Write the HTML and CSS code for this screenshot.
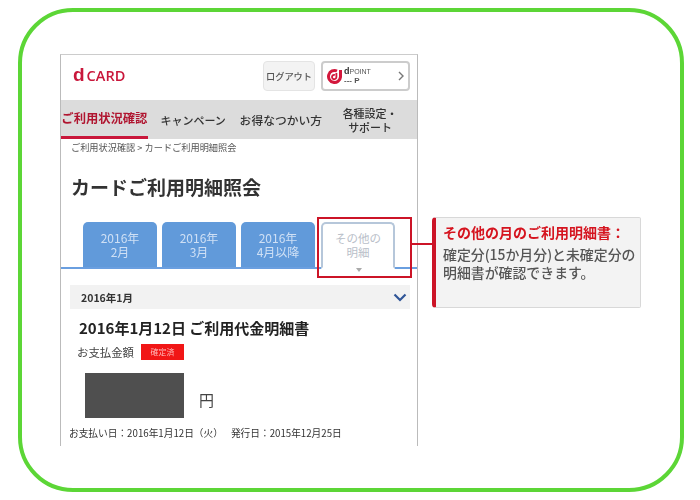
FILE: index.html
```html
<!DOCTYPE html>
<html lang="ja">
<head>
<meta charset="UTF-8">
<meta name="viewport" content="width=device-width, initial-scale=1.0">
<title>カードご利用明細照会</title>
<link rel="stylesheet" href="styles.css">
</head>
<body>

<div class="frame">
    <div class="phone">
        <div class="top">
            <div class="logo"><span class="logo-d">d</span><span class="logo-card">CARD</span></div>
            <div class="top-buttons">
                <div class="logout">ログアウト</div>
                <div class="point">
                    <svg class="point-icon" width="16" height="17" viewBox="0 0 16 17">
                        <path d="M10 3 A6 6 0 1 0 13.5 9 V2" fill="none" stroke="#d3173c" stroke-width="3"/>
                        <path d="M8 7 A2.2 2.2 0 1 0 9.4 9 V5" fill="none" stroke="#d3173c" stroke-width="1.8"/>
                    </svg>
                    <div class="point-text">
                        <div class="point-name"><b>d</b>POINT</div>
                        <div class="point-value">--- P</div>
                    </div>
                    <svg class="point-arrow" width="6" height="10" viewBox="0 0 6 10">
                        <path d="M1 1 L5 5 L1 9" fill="none" stroke="#777" stroke-width="1.4"/>
                    </svg>
                </div>
            </div>
        </div>

        <div class="nav">
            <div class="nav-item active">ご利用状況確認</div>
            <div class="nav-item campaign">キャンペーン</div>
            <div class="nav-item deals">お得なつかい方</div>
            <div class="nav-item settings">各種設定・<br>サポート</div>
        </div>

        <div class="crumb">ご利用状況確認 &gt; カードご利用明細照会</div>
        <h1>カードご利用明細照会</h1>

        <div class="tabs">
            <div class="tab">2016年<br>2月</div>
            <div class="tab">2016年<br>3月</div>
            <div class="tab">2016年<br>4月以降</div>
            <div class="tab other">その他の<br>明細<span class="tab-mark"></span></div>
        </div>

        <div class="month">
            <span>2016年1月</span>
            <svg width="14" height="9" viewBox="0 0 14 9">
                <path d="M1.5 1.5 L7 7 L12.5 1.5" fill="none" stroke="#2f5597" stroke-width="2.2"/>
            </svg>
        </div>

        <h2>2016年1月12日 ご利用代金明細書</h2>
        <div class="amount-label">お支払金額 <span class="badge">確定済</span></div>
        <div class="amount">
            <div class="hidden-value"></div>
            <span class="yen">円</span>
        </div>
        <div class="dates">
            <span>お支払い日：2016年1月12日（火）</span>
            <span>発行日：2015年12月25日</span>
        </div>
    </div>

    <div class="highlight"></div>
    <div class="connector"></div>
    <div class="callout">
        <div class="callout-title">その他の月のご利用明細書：</div>
        <div class="callout-text">確定分(15か月分)と未確定分の<br>明細書が確認できます。</div>
    </div>
</div>

</body>
</html>
```

FILE: styles.css
```css
* {
    box-sizing: border-box;
}
body {
    font-family: "Noto Sans CJK JP", "Liberation Sans", sans-serif;
    margin: 0;
    padding: 8px 16px 0 18px;
    background-color: #fff;
    color: #333;
}
.frame {
    position: relative;
    height: 484px;
    padding: 42px 0 0 38px;
    border: 4px solid #5cd636;
    border-radius: 55px;
}
.phone {
    width: 358px;
    height: 392px;
    overflow: hidden;
    border: 1px solid #bbb;
    border-top-color: #ccc;
    border-bottom: none;
    filter: blur(0.45px);
}
.top {
    display: flex;
    justify-content: space-between;
    height: 45px;
    padding: 6px 7px 0 12px;
}
.logo {
    display: flex;
    align-items: baseline;
    gap: 2px;
    height: 30px;
    padding-top: 2px;
    font-family: "Open Sans", sans-serif;
    line-height: 24px;
    color: #c9173b;
}
.logo-d {
    font-family: "Liberation Sans", sans-serif;
    font-size: 19px;
    font-weight: bold;
}
.logo-card {
    font-size: 14.5px;
    font-weight: 600;
}
.top-buttons {
    display: flex;
    gap: 6px;
}
.logout {
    width: 52px;
    height: 30px;
    line-height: 29px;
    text-align: center;
    font-size: 9.2px;
    font-weight: 500;
    color: #555;
    background-color: #f3f3f3;
    border: 1px solid #e4e4e4;
    border-radius: 4px;
}
.point {
    display: flex;
    align-items: center;
    width: 89px;
    height: 30px;
    padding: 0 4px 0 4px;
    background-color: #fff;
    border: 2px solid #ccc;
    border-radius: 4px;
}
.point-text {
    flex: 1;
    margin-left: 1px;
    color: #555;
    font-family: "Liberation Sans", sans-serif;
    line-height: 9px;
}
.point-name {
    font-size: 7px;
}
.point-name b {
    font-size: 9px;
    color: #333;
}
.point-value {
    font-size: 8px;
    font-weight: bold;
}
.nav {
    display: flex;
    height: 39px;
    background-color: #dcdcdc;
    color: #333;
    font-size: 11.5px;
    font-weight: 500;
    white-space: nowrap;
}
.nav-item {
    display: flex;
    align-items: center;
    justify-content: center;
    text-align: center;
    line-height: 14px;
}
.nav-item.active {
    width: 87px;
    font-size: 12.3px;
    color: #b01530;
    font-weight: bold;
    border-bottom: 3px solid #c9173b;
}
.nav-item.campaign {
    width: 91px;
    font-size: 11px;
}
.nav-item.deals {
    width: 85px;
    font-size: 11.8px;
}
.nav-item.settings {
    width: 94px;
    font-size: 11px;
}
.crumb {
    padding: 1px 0 0 10px;
    font-size: 9.2px;
    color: #555;
    line-height: 14px;
}
h1 {
    margin: 20px 0 0 10px;
    font-size: 19px;
    line-height: 26px;
    color: #333;
}
.tabs {
    display: flex;
    gap: 5px;
    height: 47px;
    margin-top: 22px;
    padding-left: 22px;
    border-bottom: 2px solid #6a9fe0;
}
.tab {
    width: 74px;
    height: 45px;
    padding-top: 9px;
    text-align: center;
    font-size: 12px;
    line-height: 14px;
    color: #cfe0f5;
    background-color: #619ada;
    border-radius: 5px 5px 0 0;
}
.tab.other {
    position: relative;
    height: 47px;
    margin-left: 1px;
    font-size: 11.5px;
    color: #b9c0c9;
    background-color: #fff;
    border: 2px solid #b6c7da;
    border-bottom-color: #fff;
    padding-top: 7px;
}
.tab-mark {
    position: absolute;
    left: 33px;
    bottom: -5px;
    border-left: 3px solid transparent;
    border-right: 3px solid transparent;
    border-top: 4px solid #aaa;
}
.month {
    display: flex;
    align-items: center;
    justify-content: space-between;
    height: 24px;
    margin: 16px 7px 0 9px;
    padding: 0 3px 0 11px;
    font-size: 10.5px;
    font-weight: bold;
    background-color: #f2f2f2;
}
h2 {
    margin: 9px 0 0 18px;
    font-size: 15px;
    line-height: 20px;
    color: #222;
}
.amount-label {
    display: flex;
    align-items: center;
    gap: 7px;
    margin: 6px 0 0 16px;
    font-size: 11.4px;
    line-height: 16px;
    color: #444;
}
.badge {
    width: 43px;
    height: 16px;
    text-align: center;
    font-size: 8px;
    color: #ffb5b5;
    background-color: #f11616;
}
.amount {
    display: flex;
    align-items: flex-end;
    gap: 15px;
    margin: 13px 0 0 24px;
}
.hidden-value {
    width: 99px;
    height: 45px;
    background-color: #4f4f4f;
}
.yen {
    font-size: 15px;
    line-height: 24px;
    margin-bottom: 6px;
    color: #444;
}
.dates {
    display: flex;
    gap: 8px;
    margin: 7px 0 0 8px;
    font-size: 9.7px;
    line-height: 16px;
    color: #333;
}
.highlight {
    position: absolute;
    left: 295px;
    top: 205px;
    width: 95px;
    height: 61px;
    border: 2px solid #cc1427;
}
.connector {
    position: absolute;
    left: 389px;
    top: 231px;
    width: 23px;
    height: 2px;
    background-color: #cc1427;
}
.callout {
    position: absolute;
    left: 410px;
    top: 205px;
    width: 209px;
    height: 91px;
    padding: 4px 0 0 7px;
    background-color: #f3f3f3;
    border: 1px solid #d8d8d8;
    border-left: 4px solid #cc1427;
    border-radius: 4px 2px 2px 4px;
    filter: blur(0.4px);
}
.callout-title {
    font-size: 14px;
    font-weight: bold;
    line-height: 20px;
    color: #d5141f;
    white-space: nowrap;
}
.callout-text {
    margin-top: 3px;
    font-size: 13.9px;
    font-weight: 500;
    line-height: 18px;
    color: #555;
    white-space: nowrap;
}
```
